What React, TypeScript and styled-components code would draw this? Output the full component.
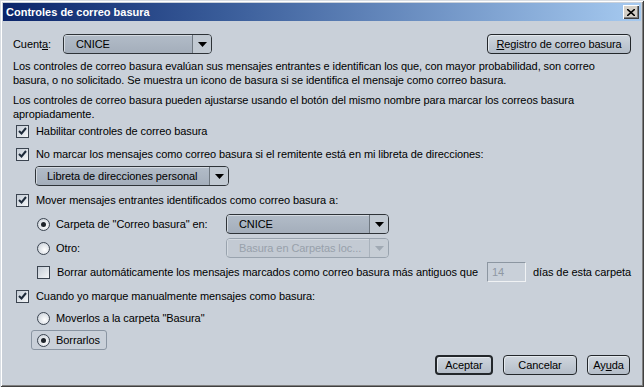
import React from "react";
import styled, { createGlobalStyle } from "styled-components";

const GlobalStyle = createGlobalStyle`
  html, body {
    margin: 0;
    padding: 0;
    background: #c9d0d9;
  }
  body {
    font-family: "Liberation Sans", Arial, sans-serif;
    font-size: 11px;
    letter-spacing: -0.08px;
    color: #000;
  }
`;

const Window = styled.div`
  width: 644px;
  height: 387px;
  box-sizing: border-box;
  display: flex;
  flex-direction: column;
  padding: 3px;
  background: #c9d0d9;
  box-shadow: inset 1px 1px 0 #d8dde3, inset -1px -1px 0 #404040,
    inset 2px 2px 0 #ffffff, inset -2px -2px 0 #808080;
`;

const TitleBar = styled.div`
  height: 18px;
  display: flex;
  align-items: center;
  justify-content: space-between;
  padding: 0 2px 0 3px;
  background: linear-gradient(to right, #0a246a, #3a5d9a 35%, #a6caf0);
  color: #fff;
  font-weight: bold;
  font-size: 11px;
  letter-spacing: 0;
`;

const CloseButton = styled.div`
  width: 16px;
  height: 14px;
  box-sizing: border-box;
  display: flex;
  align-items: center;
  justify-content: center;
  background: #d4d0c8;
  box-shadow: inset 1px 1px 0 #ffffff, inset -1px -1px 0 #404040,
    inset -2px -2px 0 #808080;
`;

const Body = styled.div`
  flex: 1;
  display: flex;
  flex-direction: column;
  padding: 0 10px 9px 10px;
`;

const Row = styled.div<{ $top: number; $indent?: number; $h?: number }>`
  display: flex;
  align-items: center;
  margin-top: ${(p) => p.$top}px;
  padding-left: ${(p) => p.$indent ?? 0}px;
  height: ${(p) => p.$h ?? 16}px;
`;

const Paragraph = styled.p<{ $top: number }>`
  margin: ${(p) => p.$top}px 0 0 0;
  line-height: 14px;
`;

const Label = styled.span<{ $width?: number; $disabled?: boolean }>`
  width: ${(p) => (p.$width ? `${p.$width}px` : "auto")};
  flex-shrink: 0;
  color: ${(p) => (p.$disabled ? "#8a939e" : "#000")};
  white-space: nowrap;
`;

const ComboBox = styled.div<{ $width: number; $disabled?: boolean }>`
  width: ${(p) => p.$width}px;
  height: 20px;
  box-sizing: border-box;
  display: flex;
  border: 1px solid ${(p) => (p.$disabled ? "#99a3ae" : "#2e3338")};
  border-radius: 4px;
  background: ${(p) =>
    p.$disabled ? "#c3cad3" : "linear-gradient(#b2bcc8, #a4aebb)"};
  color: ${(p) => (p.$disabled ? "#98a1ab" : "#000")};
  overflow: hidden;
`;

const ComboText = styled.div<{ $pad: number }>`
  flex: 1;
  display: flex;
  align-items: center;
  padding-left: ${(p) => p.$pad}px;
  white-space: nowrap;
  box-shadow: inset 1px 1px 0 #d4dae1;
`;

const ComboArrow = styled.div<{ $disabled?: boolean }>`
  width: 18px;
  display: flex;
  align-items: center;
  justify-content: center;
  border-left: 1px solid ${(p) => (p.$disabled ? "#a9b2bc" : "#6e7780")};
  background: ${(p) => (p.$disabled ? "#c6cdd5" : "#c1c9d2")};
`;

const Button = styled.div<{ $width: number; $default?: boolean }>`
  width: ${(p) => p.$width}px;
  height: 20px;
  box-sizing: border-box;
  display: flex;
  align-items: center;
  justify-content: center;
  border: ${(p) => (p.$default ? "2px" : "1px")} solid #23272b;
  border-radius: 4px;
  background: linear-gradient(#cfd6de, #b4bdc8);
  box-shadow: inset 1px 1px 0 #e3e8ed;
  white-space: nowrap;
`;

const Box = styled.span`
  width: 13px;
  height: 13px;
  box-sizing: border-box;
  flex-shrink: 0;
  display: flex;
  align-items: center;
  justify-content: center;
  border: 1px solid #3b4450;
  background: linear-gradient(135deg, #c4ccd6, #f4f6f8);
  margin-right: 7px;
`;

const Radio = styled.span`
  width: 13px;
  height: 13px;
  box-sizing: border-box;
  flex-shrink: 0;
  display: flex;
  align-items: center;
  justify-content: center;
  border: 1px solid #3b4450;
  border-radius: 50%;
  background: radial-gradient(circle at 60% 60%, #ffffff, #c2cad4);
  margin-right: 6px;
`;

const Dot = styled.span`
  width: 5px;
  height: 5px;
  border-radius: 50%;
  background: #1d232a;
`;

const FocusRing = styled.div`
  display: flex;
  align-items: center;
  height: 20px;
  box-sizing: border-box;
  padding: 0 6px 0 5px;
  margin-left: -6px;
  border: 1px solid #8a95a2;
  border-radius: 3px;
`;

const NumberField = styled.div`
  width: 39px;
  height: 20px;
  box-sizing: border-box;
  display: flex;
  align-items: center;
  padding-left: 4px;
  border: 1px solid #8c96a1;
  border-right-color: #f0f2f4;
  border-bottom-color: #f0f2f4;
  background: #c9d0d9;
  color: #8f98a3;
  margin: 0 7px 0 auto;
`;

const Footer = styled.div`
  margin-top: auto;
  display: flex;
  justify-content: flex-end;
  gap: 10px;
  padding-right: 1px;
`;

const U = styled.span`
  text-decoration: underline;
`;

const Arrow = ({ disabled }: { disabled?: boolean }) => (
  <svg width="9" height="5" viewBox="0 0 9 5">
    <polygon points="0,0 9,0 4.5,5" fill={disabled ? "#a0a9b3" : "#000"} />
  </svg>
);

const Check = () => (
  <svg width="9" height="8" viewBox="0 0 9 8">
    <polyline
      points="1,4 3.5,6.5 8,1"
      fill="none"
      stroke="#1d2a3a"
      strokeWidth="2"
    />
  </svg>
);

const Checkbox = ({ checked }: { checked?: boolean }) => (
  <Box>{checked && <Check />}</Box>
);

const RadioButton = ({ checked }: { checked?: boolean }) => (
  <Radio>{checked && <Dot />}</Radio>
);

const Combo = ({
  width,
  pad,
  text,
  disabled,
}: {
  width: number;
  pad: number;
  text: string;
  disabled?: boolean;
}) => (
  <ComboBox $width={width} $disabled={disabled}>
    <ComboText $pad={pad}>{text}</ComboText>
    <ComboArrow $disabled={disabled}>
      <Arrow disabled={disabled} />
    </ComboArrow>
  </ComboBox>
);

export default function App() {
  return (
    <>
      <GlobalStyle />
      <Window>
        <TitleBar>
          <span>Controles de correo basura</span>
          <CloseButton>
            <svg width="8" height="7" viewBox="0 0 8 7">
              <path d="M0,0 L8,7 M8,0 L0,7" stroke="#000" strokeWidth="1.6" />
            </svg>
          </CloseButton>
        </TitleBar>
        <Body>
          <Row $top={13} $h={20}>
            <Label $width={50}>
              Cuent<U>a</U>:
            </Label>
            <Combo width={149} pad={12} text="CNICE" />
            <Button $width={144} style={{ marginLeft: "auto" }}>
              <span>
                <U>R</U>egistro de correo basura
              </span>
            </Button>
          </Row>
          <Paragraph $top={5}>
            Los controles de correo basura evalúan sus mensajes entrantes e
            identifican los que, con mayor probabilidad, son correo basura, o
            no solicitado. Se muestra un icono de basura si se identifica el
            mensaje como correo basura.
          </Paragraph>
          <Paragraph $top={6}>
            Los controles de correo basura pueden ajustarse usando el botón del
            mismo nombre para marcar los correos basura apropiadamente.
          </Paragraph>
          <Row $top={2} $indent={3}>
            <Checkbox checked />
            <Label>Habilitar controles de correo basura</Label>
          </Row>
          <Row $top={7} $indent={3}>
            <Checkbox checked />
            <Label>
              No marcar los mensajes como correo basura si el remitente está en
              mi libreta de direcciones:
            </Label>
          </Row>
          <Row $top={4} $indent={22} $h={20}>
            <Combo width={194} pad={11} text="Libreta de direcciones personal" />
          </Row>
          <Row $top={6} $indent={3}>
            <Checkbox checked />
            <Label>Mover mensajes entrantes identificados como correo basura a:</Label>
          </Row>
          <Row $top={6} $indent={24} $h={20}>
            <RadioButton checked />
            <Label $width={170}>Carpeta de "Correo basura" en:</Label>
            <Combo width={163} pad={12} text="CNICE" />
          </Row>
          <Row $top={4} $indent={24} $h={20}>
            <RadioButton />
            <Label $width={170}>Otro:</Label>
            <Combo width={163} pad={12} text="Basura en Carpetas loc..." disabled />
          </Row>
          <Row $top={4} $indent={24} $h={20}>
            <Checkbox />
            <Label>
              Borrar automáticamente los mensajes marcados como correo basura
              más antiguos que
            </Label>
            <NumberField>14</NumberField>
            <Label>días de esta carpeta</Label>
          </Row>
          <Row $top={6} $indent={3}>
            <Checkbox checked />
            <Label>Cuando yo marque manualmente mensajes como basura:</Label>
          </Row>
          <Row $top={6} $indent={24}>
            <RadioButton />
            <Label>Moverlos a la carpeta "Basura"</Label>
          </Row>
          <Row $top={4} $indent={24} $h={20}>
            <FocusRing>
              <RadioButton checked />
              <Label>Borrarlos</Label>
            </FocusRing>
          </Row>
          <Footer>
            <Button $width={58} $default>
              Aceptar
            </Button>
            <Button $width={74}>Cancelar</Button>
            <Button $width={43}>
              <span>
                Ay<U>u</U>da
              </span>
            </Button>
          </Footer>
        </Body>
      </Window>
    </>
  );
}
